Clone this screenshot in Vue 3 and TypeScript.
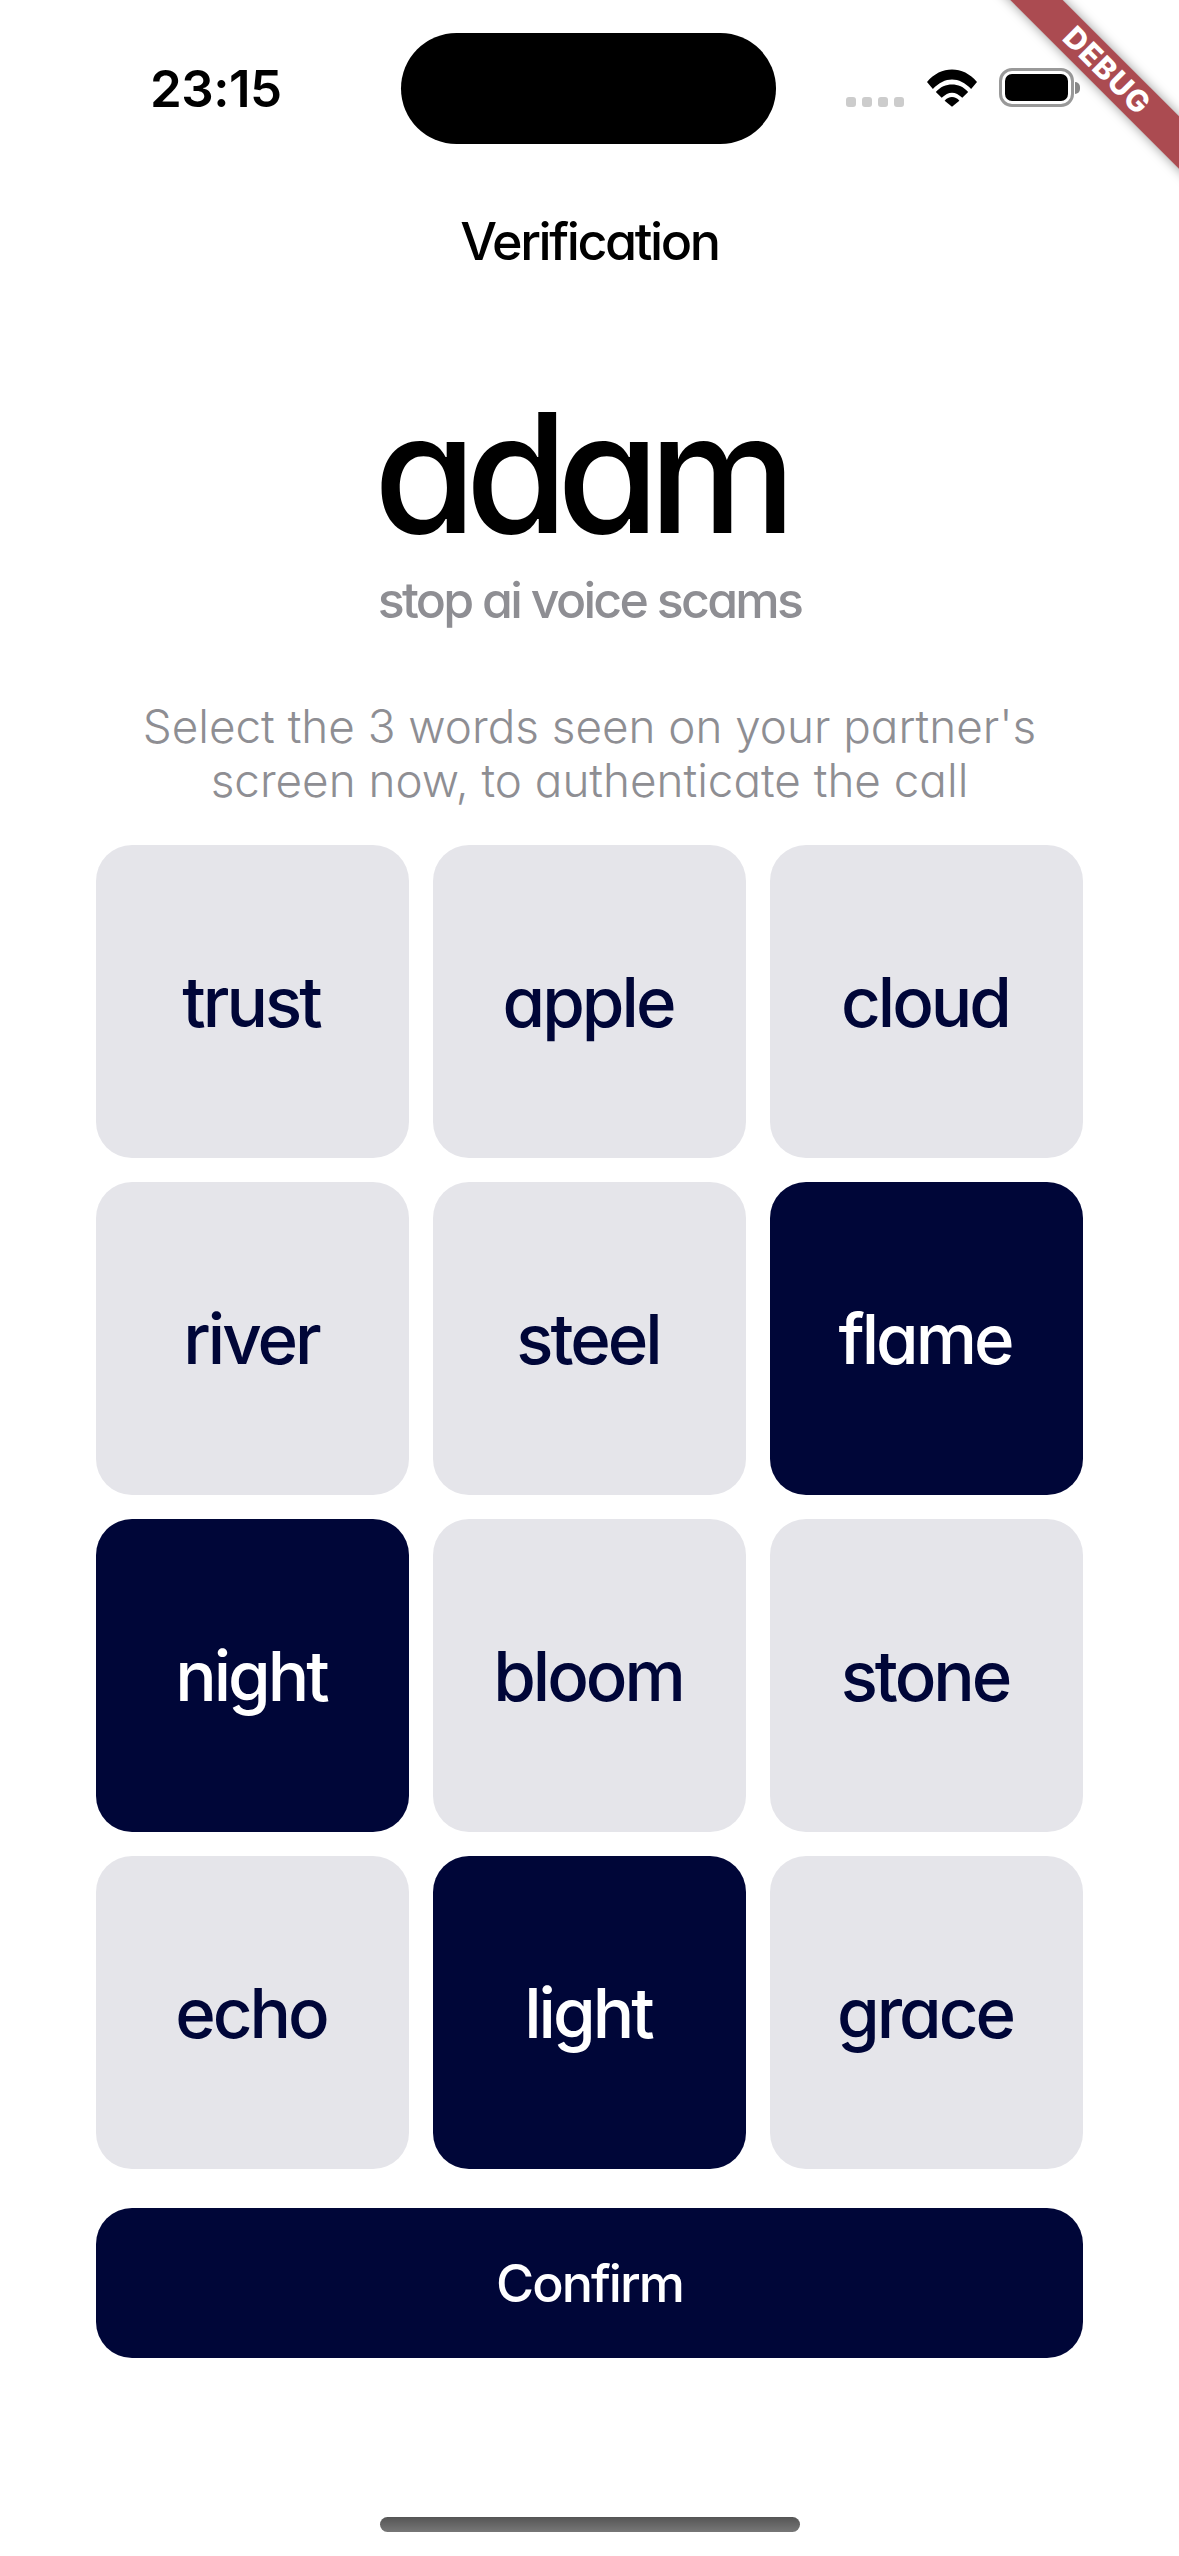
<script setup lang="ts">
interface Word {
  text: string
  selected: boolean
}

const selectedWords = ['flame', 'night', 'light']
const words: Word[] = [
  'trust', 'apple', 'cloud',
  'river', 'steel', 'flame',
  'night', 'bloom', 'stone',
  'echo', 'light', 'grace',
].map((text) => ({ text, selected: selectedWords.includes(text) }))
</script>

<template>
  <div class="screen">
    <header class="status-bar">
      <span class="time">23:15</span>
      <div class="island"></div>
      <div class="status-icons">
        <div class="signal">
          <i></i><i></i><i></i><i></i>
        </div>
        <svg class="wifi" width="50" height="38" viewBox="0 0 51 38">
          <path d="M0 13 C14 -4 37 -4 51 13 L45 20 C33 7 18 7 6 20 Z" fill="#000" />
          <path d="M9 23 C18 13 33 13 42 23 L36 29 C29 22 22 22 15 29 Z" fill="#000" />
          <path d="M18 32 C22 27 29 27 33 32 L25.5 38 Z" fill="#000" />
        </svg>
        <div class="battery">
          <div class="battery-fill"></div>
        </div>
        <div class="battery-cap"></div>
      </div>
    </header>

    <h2 class="nav-title">Verification</h2>

    <section class="brand">
      <h1 class="brand-name">adam</h1>
      <p class="brand-tag">stop ai voice scams</p>
    </section>

    <p class="hint">Select the 3 words seen on your partner's<br />screen now, to authenticate the call</p>

    <div class="word-grid">
      <button
        v-for="word in words"
        :key="word.text"
        class="word"
        :class="{ selected: word.selected }"
      >
        {{ word.text }}
      </button>
    </div>

    <button class="confirm">Confirm</button>

    <div class="home-indicator"></div>

    <div class="debug-ribbon">DEBUG</div>
  </div>
</template>

<style>
html,
body {
  margin: 0;
  background: #fff;
}
</style>

<style scoped>
.screen {
  position: relative;
  width: 1179px;
  height: 2556px;
  overflow: hidden;
  background: #fff;
  display: flex;
  flex-direction: column;
  align-items: center;
  font-family: Inter, "Liberation Sans", sans-serif;
  font-feature-settings: "cv11" 1;
}

.status-bar {
  width: 100%;
  height: 144px;
  flex-shrink: 0;
  box-sizing: border-box;
  padding: 33px 0 0 150px;
  display: flex;
  align-items: flex-start;
}

.time {
  width: 251px;
  flex-shrink: 0;
  margin-top: 26px;
  font-size: 51px;
  line-height: 60px;
  font-weight: 600;
  letter-spacing: -0.5px;
  color: #000;
}

.island {
  width: 375px;
  height: 111px;
  border-radius: 56px;
  background: #000;
  flex-shrink: 0;
}

.status-icons {
  margin: 35px 0 0 70px;
  display: flex;
  align-items: center;
}

.signal {
  display: flex;
  gap: 6px;
  margin-top: 28px;
}

.signal i {
  width: 10px;
  height: 10px;
  border-radius: 3px;
  background: #ccc;
}

.wifi {
  margin-left: 23px;
}

.battery {
  width: 75px;
  height: 39px;
  margin-left: 22px;
  box-sizing: border-box;
  border: 3px solid #999;
  border-radius: 13px;
  padding: 3px;
}

.battery-fill {
  width: 100%;
  height: 100%;
  border-radius: 7px;
  background: #000;
}

.battery-cap {
  width: 5px;
  height: 12px;
  margin-left: 1px;
  border-radius: 0 6px 6px 0;
  background: #888;
}

.nav-title {
  margin: 68px 0 0;
  font-size: 52px;
  line-height: 60px;
  font-weight: 500;
  letter-spacing: -2.4px;
  color: #000;
}

.brand {
  margin-top: 113px;
  display: flex;
  flex-direction: column;
  align-items: center;
}

.brand-name {
  margin: 0;
  padding-right: 20px;
  font-size: 166px;
  line-height: 176px;
  font-weight: 500;
  letter-spacing: -11px;
  color: #000;
}

.brand-tag {
  margin: 11px 0 0;
  font-size: 50px;
  line-height: 56px;
  font-weight: 500;
  letter-spacing: -2.7px;
  color: #8e8e93;
}

.hint {
  margin: 72px 0 0;
  font-size: 45.8px;
  line-height: 54px;
  font-weight: 300;
  text-align: center;
  color: #8e8e93;
}

.word-grid {
  margin-top: 37px;
  display: grid;
  grid-template-columns: repeat(3, 313px);
  grid-auto-rows: 313px;
  gap: 24px;
}

.word {
  border: none;
  border-radius: 36px;
  padding: 0 3px 0 0;
  background: #e5e5ea;
  color: #000638;
  font-family: inherit;
  font-feature-settings: inherit;
  font-size: 69px;
  font-weight: 500;
  letter-spacing: -3px;
}

.word.selected {
  background: #000638;
  color: #fff;
}

.confirm {
  width: 987px;
  height: 150px;
  margin-top: 39px;
  flex-shrink: 0;
  border: none;
  border-radius: 36px;
  background: #000638;
  color: #fff;
  font-family: inherit;
  font-feature-settings: inherit;
  font-size: 52px;
  font-weight: 500;
  letter-spacing: -2px;
}

.home-indicator {
  position: absolute;
  left: 380px;
  bottom: 24px;
  width: 420px;
  height: 15px;
  border-radius: 8px;
  background: linear-gradient(#555, #777);
}

.debug-ribbon {
  position: absolute;
  top: 52px;
  right: -78px;
  width: 300px;
  height: 37px;
  line-height: 37px;
  text-align: center;
  transform: rotate(45deg);
  background: rgba(150, 30, 38, 0.8);
  box-shadow: 0 0 12px rgba(0, 0, 0, 0.4);
  font-size: 30px;
  font-weight: 800;
  letter-spacing: 1px;
  color: #fff;
}
</style>
